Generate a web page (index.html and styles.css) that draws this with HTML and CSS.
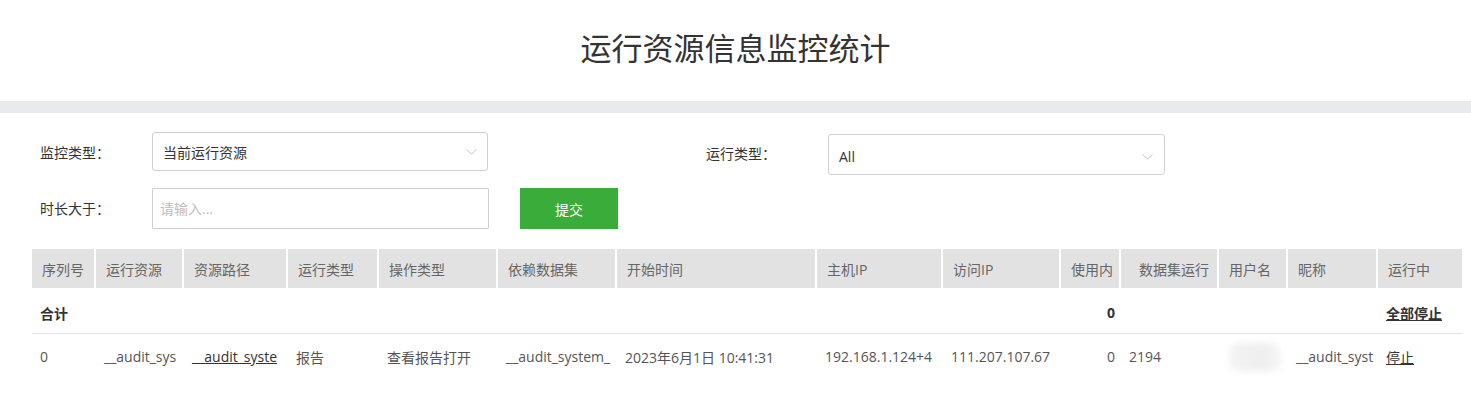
FILE: index.html
```html
<!DOCTYPE html>
<html lang="zh-CN">
    <head>
        <meta charset="UTF-8">
        <meta name="viewport" content="width=device-width, initial-scale=1.0">
        <title>运行资源信息监控统计</title>
        <link rel="stylesheet" href="styles.css">
    </head>
    <body>
        <div class="header">
            <h1 class="title">运行资源信息监控统计</h1>
        </div>
        <div class="band"></div>

        <div class="filters">
            <div class="row">
                <span class="label">监控类型：</span>
                <div class="select">
                    <span>当前运行资源</span>
                    <svg class="chevron" width="11" height="6" viewBox="0 0 11 6"><path d="M0.5 0.5 L5.5 5 L10.5 0.5" fill="none" stroke="#c2c2c2" stroke-width="1"/></svg>
                </div>
                <span class="label labelRight">运行类型：</span>
                <div class="select selectLow">
                    <span>All</span>
                    <svg class="chevron" width="11" height="6" viewBox="0 0 11 6"><path d="M0.5 0.5 L5.5 5 L10.5 0.5" fill="none" stroke="#c2c2c2" stroke-width="1"/></svg>
                </div>
            </div>
            <div class="row rowSecond">
                <span class="label">时长大于：</span>
                <input type="text" class="box" placeholder="请输入...">
                <button type="submit" class="button">提交</button>
            </div>
        </div>

        <table class="grid">
            <colgroup>
                <col class="w64"><col class="w88"><col class="w104"><col class="w91"><col class="w119"><col class="w119"><col class="w200">
                <col class="w126"><col class="w118"><col class="w60"><col class="w98"><col class="w69"><col class="w90"><col class="w84">
            </colgroup>
            <thead>
                <tr>
                    <th>序列号</th>
                    <th>运行资源</th>
                    <th>资源路径</th>
                    <th>运行类型</th>
                    <th>操作类型</th>
                    <th>依赖数据集</th>
                    <th>开始时间</th>
                    <th>主机IP</th>
                    <th>访问IP</th>
                    <th class="num">使用内</th>
                    <th class="num">数据集运行</th>
                    <th>用户名</th>
                    <th>昵称</th>
                    <th class="last">运行中</th>
                </tr>
            </thead>
            <tbody>
                <tr class="total">
                    <td>合计</td>
                    <td></td><td></td><td></td><td></td><td></td><td></td><td></td><td></td>
                    <td class="num">0</td>
                    <td></td><td></td><td></td>
                    <td><a href="#" class="link">全部停止</a></td>
                </tr>
                <tr class="item">
                    <td>0</td>
                    <td>__audit_sys</td>
                    <td><a href="#" class="link">__audit_syste</a></td>
                    <td>报告</td>
                    <td>查看报告打开</td>
                    <td>__audit_system_</td>
                    <td>2023年6月1日 10:41:31</td>
                    <td>192.168.1.124+4</td>
                    <td>111.207.107.67</td>
                    <td class="num">0</td>
                    <td>2194</td>
                    <td><span class="masked"></span></td>
                    <td>__audit_syst</td>
                    <td><a href="#" class="link">停止</a></td>
                </tr>
            </tbody>
        </table>
    </body>
</html>
```

FILE: styles.css
```css
* {
    box-sizing: border-box;
}
body {
    margin: 0;
    font-family: "Open Sans", "Noto Sans CJK SC", sans-serif;
    font-size: 14px;
    color: #333;
    background: #fff;
}
.header {
    height: 101px;
    padding-top: 27px;
}
.title {
    margin: 0;
    text-align: center;
    font-family: "Noto Sans CJK SC", sans-serif;
    font-size: 31px;
    font-weight: 400;
    line-height: 40px;
    color: #333;
}
.band {
    height: 12px;
    background-color: #e8ebee;
}
.filters {
    padding: 19px 0 0 40px;
}
.row {
    display: flex;
    align-items: flex-start;
    height: 42px;
}
.rowSecond {
    margin-top: 14px;
    height: 41px;
}
.label {
    width: 112px;
    line-height: 42px;
    color: #333;
}
.labelRight {
    width: 122px;
    margin-left: 218px;
    line-height: 44px;
}
.select {
    display: flex;
    align-items: center;
    justify-content: space-between;
    width: 336px;
    height: 39px;
    padding: 0 10px 0 10px;
    border: 1px solid #d0d0d0;
    border-radius: 3px;
    color: #333;
}
.selectLow {
    width: 337px;
    height: 41px;
    margin-top: 2px;
    padding-top: 4px;
    padding-right: 11px;
}
.chevron {
    display: block;
}
.box {
    width: 337px;
    height: 41px;
    padding: 0 7px;
    border: 1px solid #cfcfcf;
    border-radius: 1px;
    font-family: inherit;
    font-size: 14px;
    color: #333;
    outline: none;
}
.box::placeholder {
    color: #bdbdbd;
}
.button {
    width: 98px;
    height: 41px;
    margin-left: 31px;
    background-color: #3aac3a;
    color: #fff;
    border: none;
    font-family: inherit;
    font-size: 14px;
    cursor: pointer;
}
.grid {
    margin: 20px 0 0 32px;
    width: 1430px;
    table-layout: fixed;
    border-collapse: separate;
    border-spacing: 0;
}
.w64 { width: 64px; }
.w88 { width: 88px; }
.w104 { width: 104px; }
.w91 { width: 91px; }
.w119 { width: 119px; }
.w200 { width: 200px; }
.w126 { width: 126px; }
.w118 { width: 118px; }
.w60 { width: 60px; }
.w98 { width: 98px; }
.w69 { width: 69px; }
.w90 { width: 90px; }
.w84 { width: 84px; }
.grid th {
    height: 39px;
    padding: 0 6px 0 10px;
    background-color: #e2e2e2;
    background-clip: padding-box;
    border-right: 2px solid #fff;
    text-align: left;
    font-weight: 400;
    color: #666;
    white-space: nowrap;
    overflow: hidden;
}
.grid th.last {
    border-right: none;
}
.grid th.num {
    text-align: right;
    padding-right: 8px;
}
.grid td {
    padding: 0 8px;
    white-space: nowrap;
    overflow: hidden;
    color: #555;
}
.grid td.num {
    text-align: right;
    padding-right: 6px;
}
.total td {
    height: 46px;
    padding-top: 4px;
    font-weight: 700;
    color: #333;
    border-bottom: 1px solid #e6e6e6;
}
.item td {
    height: 45px;
}
.link {
    color: #333;
    text-decoration: underline;
}
.masked {
    display: inline-block;
    vertical-align: middle;
    width: 52px;
    height: 28px;
    margin-left: 2px;
    border-radius: 8px;
    background: linear-gradient(90deg, #f4f4f4, #eeeeee 60%, #f6f6f6);
    filter: blur(3px);
}
```
